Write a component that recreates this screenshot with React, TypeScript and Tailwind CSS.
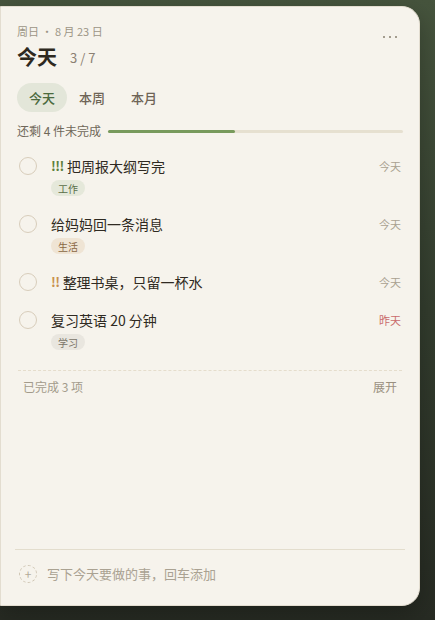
const font = { fontFamily: '"Noto Sans CJK SC", "Noto Sans", sans-serif' };

interface Task {
  title: string;
  flag?: string;
  flagClass?: string;
  tag?: string;
  tagClass?: string;
  when: string;
  overdue?: boolean;
}

const tasks: Task[] = [
  {
    title: "把周报大纲写完",
    flag: "!!!",
    flagClass: "text-[#5d7f3c]",
    tag: "工作",
    tagClass: "bg-[#e5e8da] text-[#5a6e48]",
    when: "今天",
  },
  {
    title: "给妈妈回一条消息",
    tag: "生活",
    tagClass: "bg-[#efe4d4] text-[#8a6845]",
    when: "今天",
  },
  {
    title: "整理书桌，只留一杯水",
    flag: "!!",
    flagClass: "text-[#c8914e]",
    when: "今天",
  },
  {
    title: "复习英语 20 分钟",
    tag: "学习",
    tagClass: "bg-[#e9e6df] text-[#7a7468]",
    when: "昨天",
    overdue: true,
  },
];

const TaskRow = ({ task }: { task: Task }) => (
  <div className="flex items-start py-[9px]">
    <span className="ml-[2px] mt-[1px] h-[18px] w-[18px] shrink-0 rounded-full border-[1.5px] border-[#d8cdbb]" />
    <div className="ml-[14px] flex min-w-0 flex-1 flex-col items-start">
      <div className="flex h-5 items-center text-[14px] leading-5 text-[#2f2a22]">
        {task.flag && (
          <span className={`mr-[3px] text-[13px] font-bold tracking-[-0.5px] ${task.flagClass}`}>
            {task.flag}
          </span>
        )}
        {task.title}
      </div>
      {task.tag && (
        <span
          className={`mt-1 flex h-4 items-center rounded-full px-[7px] text-[10px] ${task.tagClass}`}
        >
          {task.tag}
        </span>
      )}
    </div>
    <span
      className={`mr-[2px] h-5 text-[11px] leading-5 ${
        task.overdue ? "text-[#c96b6b]" : "text-[#a9a190]"
      }`}
    >
      {task.when}
    </span>
  </div>
);

export default function App() {
  return (
    <div
      style={font}
      className="h-[620px] w-[435px] overflow-hidden bg-linear-to-b from-[#46543d] via-[#333d2e] to-[#272b23] pt-[6px]"
    >
      <div className="flex h-[600px] w-[420px] flex-col rounded-r-[18px] border border-[#e3ddd0] bg-[#f6f3ec] px-4 pt-4 shadow-[0_8px_24px_rgba(0,0,0,0.25)]">
        <div className="flex h-4 items-start justify-between">
          <div className="text-[11px] leading-4 text-[#9c9586]">周日 · 8 月 23 日</div>
          <div className="mr-[6px] mt-[13px] flex gap-[4px]">
            <span className="h-[2px] w-[2px] bg-[#a39c8e]" />
            <span className="h-[2px] w-[2px] bg-[#a39c8e]" />
            <span className="h-[2px] w-[2px] bg-[#a39c8e]" />
          </div>
        </div>
        <div className="mt-1 flex items-center">
          <h1 className="text-[20px] leading-7 font-bold text-[#2e2920]">今天</h1>
          <span className="ml-[13px] mt-[2px] text-[13px] text-[#8b8072]">3 / 7</span>
        </div>

        <div className="mt-3 flex items-center text-[13px] font-medium">
          <button className="flex h-[29px] items-center rounded-full bg-[#e3e6d9] px-3 text-[#4b6a3e]">
            今天
          </button>
          <button className="flex h-[29px] items-center px-3 text-[#6e6456]">本周</button>
          <button className="flex h-[29px] items-center px-[14px] text-[#6e6456]">本月</button>
        </div>

        <div className="mt-[11px] flex items-center">
          <span className="text-[12px] leading-4 text-[#6f6759]">还剩 4 件未完成</span>
          <div className="ml-[7px] h-[3px] flex-1 rounded-full bg-[#e6e0d0]">
            <div className="h-full w-[43%] rounded-full bg-[#789a5c]" />
          </div>
        </div>

        <div className="mt-2 flex flex-col">
          {tasks.map((t) => (
            <TaskRow key={t.title} task={t} />
          ))}
        </div>

        <div className="mx-[1px] mt-[11px] border-t border-dashed border-[#e5ddcc]" />
        <div className="flex items-center justify-between px-[6px] pt-2 text-[12px] leading-4">
          <span className="text-[#a39b8b]">已完成 3 项</span>
          <button className="text-[#9a907f]">展开</button>
        </div>

        <div className="flex-1" />

        <div className="-mx-[2px] border-t border-[#e3ddcd]" />
        <div className="flex items-center pt-[14px] pb-[21px]">
          <span className="ml-[2px] flex h-[18px] w-[18px] items-center justify-center rounded-full border border-dashed border-[#cfc5b3] text-[12px] leading-none text-[#b3aa98]">
            +
          </span>
          <span className="ml-[10px] text-[13px] leading-5 text-[#aaa292]">
            写下今天要做的事，回车添加
          </span>
        </div>
      </div>
    </div>
  );
}
